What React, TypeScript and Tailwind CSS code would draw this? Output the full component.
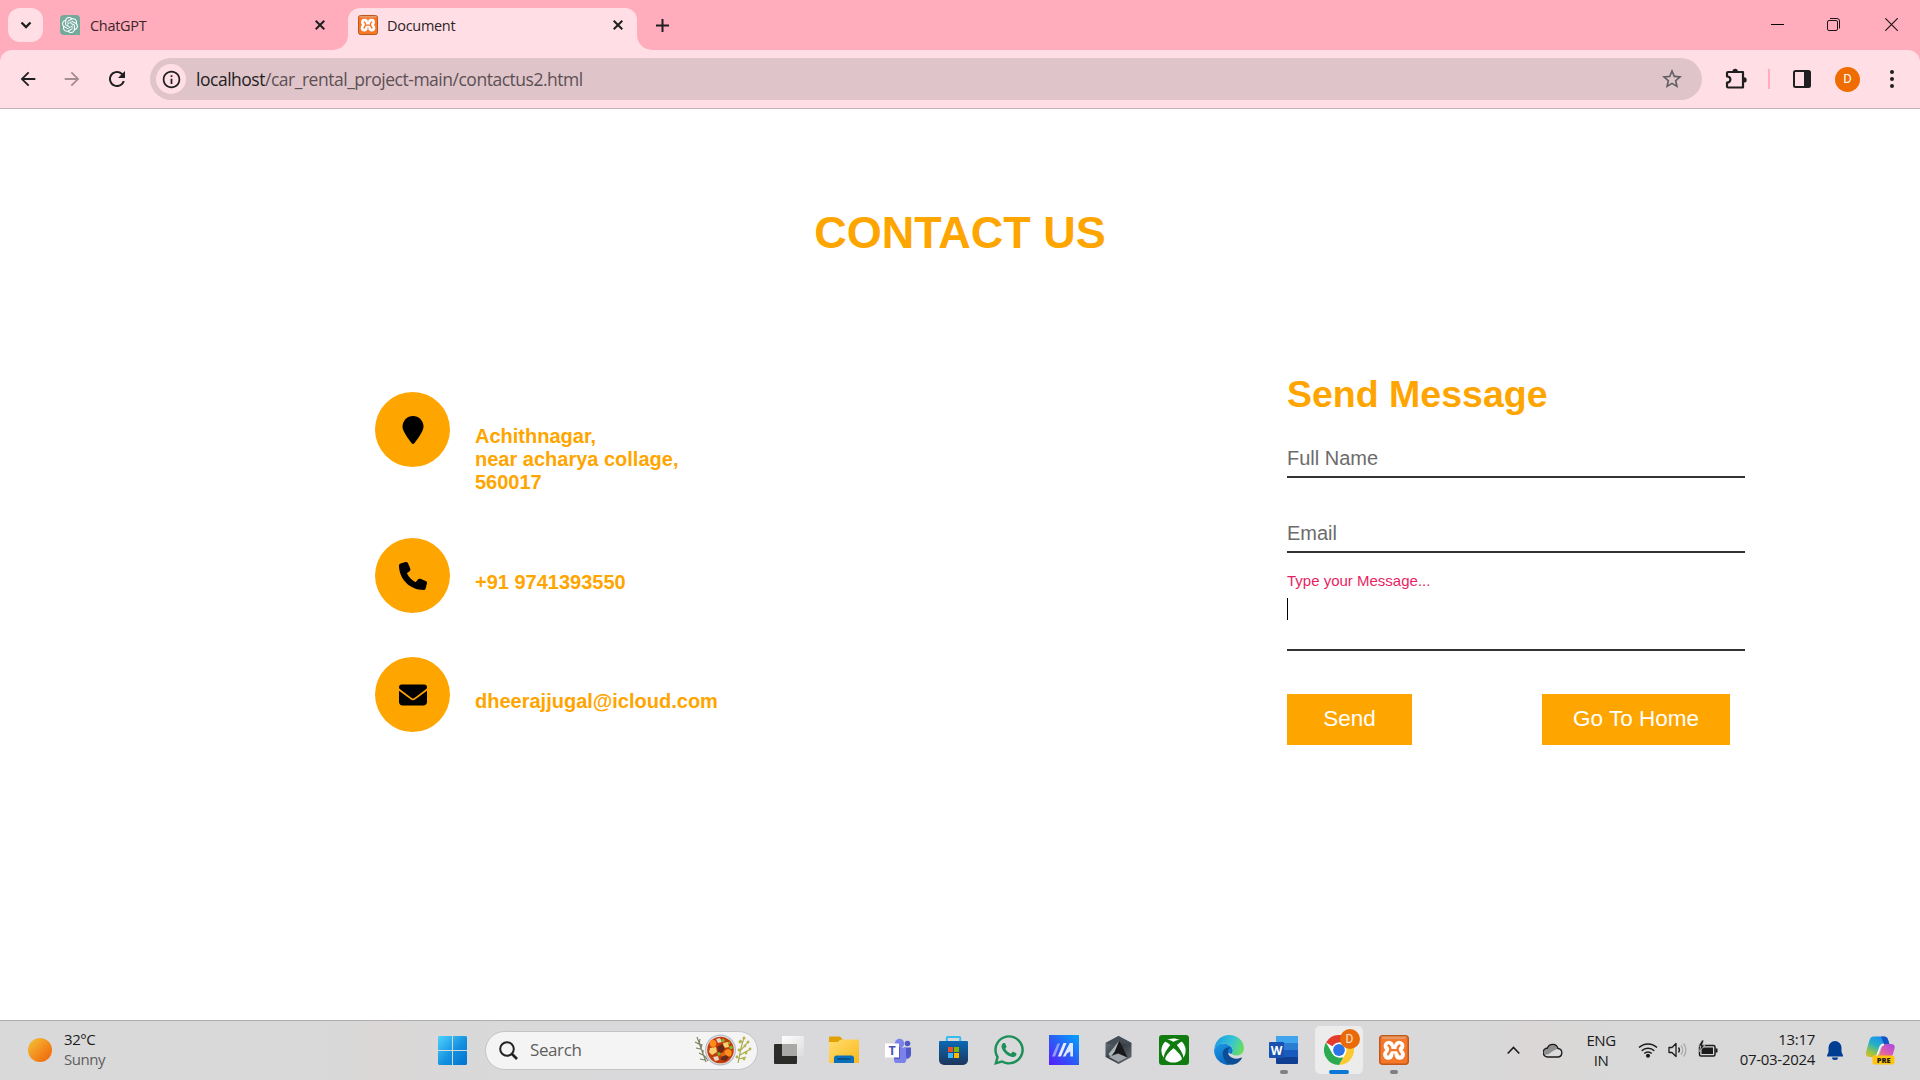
import React from "react";
import { FaEnvelope, FaLocationPin, FaPhone, FaWhatsapp, FaXbox } from "react-icons/fa6";
import { MdArrowBack, MdArrowForward, MdInfoOutline, MdRefresh, MdStarBorder } from "react-icons/md";
import { SiOpenai } from "react-icons/si";

const CloseIcon = ({ size = 10, stroke = 2 }: { size?: number; stroke?: number }) => (
  <svg width={size} height={size} viewBox="0 0 10 10" stroke="#1f1f22" strokeWidth={stroke} fill="none">
    <path d="M.7.7l8.6 8.6M9.3.7L.7 9.3" />
  </svg>
);

const Xampp = ({ size }: { size: number }) => (
  <svg width={size} height={size} viewBox="0 0 30 30">
    <rect x=".75" y=".75" width="28.5" height="28.5" rx="3" fill="#f4772a" stroke="#c2571a" strokeWidth="1.5" />
    <path d="M2 1.5h26l-2 2.5H4z" fill="#e39a68" />
    <g fill="#fff">
      <circle cx="9.800" cy="11" r="5.200" />
      <circle cx="20.200" cy="11" r="5.200" />
      <circle cx="9.300" cy="19.500" r="5.200" />
      <circle cx="20.700" cy="19.500" r="5.200" />
      <path d="M7 11h16v7.500H7z" />
    </g>
    <path
      d="M9.500 10.500c2 1.500 2.200 3 1.800 4.700-.2 1.500-1.600 2.600-2.200 4.300M20.500 10.500c-2 1.500-2.200 3-1.800 4.700.2 1.500 1.600 2.600 2.200 4.300M11 15.200h8"
      fill="none" stroke="#f4772a" strokeWidth="2.200" strokeLinecap="round"
    />
  </svg>
);

function TitleBar() {
  return (
    <div className="flex h-[50px] items-start bg-[#ffadbc]">
      <div className="mt-2 ml-2 flex h-[34px] w-[35px] items-center justify-center rounded-xl bg-[#ffdfe5]">
        <svg width="12" height="8" viewBox="0 0 12 8" fill="none" stroke="#1f1f22" strokeWidth="2.300">
          <path d="M1.500 1.500L6 6l4.500-4.500" />
        </svg>
      </div>
      <div className="ml-[17px] flex h-[50px] w-[288px] items-center">
        <span className="flex size-5 items-center justify-center rounded-[4px] rounded-br-none bg-[#74aa9c]">
          <SiOpenai size={16} color="#fff" />
        </span>
        <span className="mt-px ml-[10px] w-[225px] text-[14.500px] leading-5 tracking-[-0.3px] text-[#3a2529]">ChatGPT</span>
        <CloseIcon />
      </div>
      <div className="relative mt-[8px] flex h-[42px] w-[289px] items-center rounded-t-xl bg-[#ffdfe5] pl-[10px]">
        <svg className="absolute bottom-0 -left-[15px]" width="15" height="15" viewBox="0 0 15 15"><path d="M15 0v15H0A15 15 0 0 0 15 0" fill="#ffdfe5" /></svg>
        <svg className="absolute -right-[15px] bottom-0" width="15" height="15" viewBox="0 0 15 15"><path d="M0 0v15h15A15 15 0 0 1 0 0" fill="#ffdfe5" /></svg>
        <div className="flex w-full items-center pb-[8px]">
          <Xampp size={20} />
          <span className="mt-px ml-[9px] w-[226px] text-[14.500px] leading-5 tracking-[-0.3px] text-[#2c2426]">Document</span>
          <CloseIcon />
        </div>
      </div>
      <svg className="mt-[19px] ml-[19px]" width="13" height="13" viewBox="0 0 13 13" stroke="#1f1f22" strokeWidth="2"><path d="M6.500 0v13M0 6.500h13" /></svg>
      <div className="mt-[18px] mr-[22px] ml-auto flex gap-[43px]">
        <svg width="13" height="13" viewBox="0 0 13 13" stroke="#000"><path d="M0 6.500h13" /></svg>
        <svg width="13" height="13" viewBox="0 0 13 13" fill="none" stroke="#1f1518">
          <rect x=".5" y="2.500" width="10" height="10" rx="1.500" />
          <path d="M3 .5h7a2.500 2.500 0 0 1 2.500 2.500v7.500" />
        </svg>
        <svg className="ml-[2px]" width="13" height="13" viewBox="0 0 13 13" stroke="#1f1518" strokeWidth="1.200"><path d="M.3.300l12.400 12.400M12.700.3L.3 12.700" /></svg>
      </div>
    </div>
  );
}

function Toolbar() {
  return (
    <div className="h-[59px] border-b border-[#c9b0b5] bg-[#ffadbc]">
      <div className="flex h-[58px] items-center rounded-t-[12px] bg-[#ffdfe5] text-[#1f1f22]">
        <MdArrowBack className="ml-[17px]" size={22} />
        <MdArrowForward className="ml-[22px] text-[#a48e93]" size={22} />
        <MdRefresh className="ml-[22px]" size={24} />
        <div className="ml-[21px] flex h-[42px] w-[1552px] items-center rounded-full bg-[#dfc4c9] pl-[6px]">
          <span className="flex size-[30px] items-center justify-center rounded-full bg-[#ffdfe5]">
            <MdInfoOutline size={21} />
          </span>
          <span className="mt-px ml-[10px] text-[17.500px] tracking-[-0.48px] text-[#5c5054]">
            <span className="text-[#1f1f22]">localhost</span>/car_rental_project-main/contactus2.html
          </span>
          <MdStarBorder className="mr-[18px] ml-auto text-[#5f5f62]" size={24} />
        </div>
        <svg className="ml-[23px]" width="23" height="22" viewBox="0 0 23 22">
          <path
            d="M3 4h15v15.500H3c-.8 0-1-.4-1-1v-3.800c4.500 0 4.500-6.200 0-6.200V5c0-.7.300-1 1-1z"
            fill="none" stroke="#1f1f22" strokeWidth="2.200" strokeLinejoin="round"
          />
          <path d="M7.500 3.500a2.700 2.700 0 0 1 5.400 0zM19 9.200a2.700 2.700 0 0 1 0 5.400z" fill="#1f1f22" />
        </svg>
        <span className="ml-[20px] h-5 w-[2px] bg-[#ffadbc]" />
        <svg className="ml-[23px]" width="18" height="18" viewBox="0 0 18 18">
          <rect x="1" y="1" width="16" height="16" rx="1.500" fill="none" stroke="#1f1f22" strokeWidth="2" />
          <path d="M11 1h6v16h-6z" fill="#1f1f22" />
        </svg>
        <span className="ml-[24px] flex size-[25px] items-center justify-center rounded-full bg-[#ef6c00] font-['Roboto'] text-[13px] text-white">D</span>
        <span className="ml-[30px] flex flex-col gap-[3px]">
          <i className="size-1 rounded-full bg-[#1f1f22]" />
          <i className="size-1 rounded-full bg-[#1f1f22]" />
          <i className="size-1 rounded-full bg-[#1f1f22]" />
        </span>
      </div>
    </div>
  );
}

const ContactRow = ({ icon, children }: { icon: React.ReactNode; children: React.ReactNode }) => (
  <div className="flex h-[75px] items-start">
    <span className="flex size-[75px] items-center justify-center rounded-full bg-[#ffa500] text-black">{icon}</span>
    <p className="mt-[33px] ml-[25px] text-[20px] leading-[23px] font-bold text-[#ffa500]">{children}</p>
  </div>
);

function ContactPage() {
  return (
    <main className="h-[911px] bg-white font-['Liberation_Sans',Arial,sans-serif]">
      <h1 className="pt-[98px] text-center text-[45px] leading-[52px] font-bold text-[#ffa500]">CONTACT US</h1>
      <div className="flex">
        <section className="mt-[133px] ml-[375px] flex w-[912px] flex-col">
          <ContactRow icon={<FaLocationPin size={28} />}>
            Achithnagar,<br />near acharya collage,<br />560017
          </ContactRow>
          <div className="mt-[71px]"><ContactRow icon={<FaPhone size={28} />}>+91 9741393550</ContactRow></div>
          <div className="mt-[44px]"><ContactRow icon={<FaEnvelope size={28} />}>dheerajjugal@icloud.com</ContactRow></div>
        </section>
        <form className="w-[458px] pt-[114px]">
          <h2 className="text-[37.500px] leading-[43px] font-bold text-[#ffa500]">Send Message</h2>
          <div className="mt-[31px] h-[31px] border-b-2 border-[#333] text-[20px] leading-[23px] text-[#6c6c6c]">Full Name</div>
          <div className="mt-[44px] h-[31px] border-b-2 border-[#333] text-[20px] leading-[23px] text-[#6c6c6c]">Email</div>
          <div className="mt-[19px] h-[79px] border-b-2 border-[#333]">
            <div className="h-[17px] text-[15px] leading-[17px] text-[#e91e63]">Type your Message...</div>
            <div className="mt-[9px] h-[22px] w-px bg-black" />
          </div>
          <div className="mt-[43px] flex text-[22.500px] text-white">
            <button type="button" className="h-[51px] w-[125px] bg-[#ffa500] pb-[2px]">Send</button>
            <button type="button" className="ml-[130px] h-[51px] w-[188px] bg-[#ffa500] pb-[2px]">Go To Home</button>
          </div>
        </form>
      </div>
    </main>
  );
}

const WindowsLogo = () => (
  <svg width="29" height="29" viewBox="0 0 29 29">
    <defs><linearGradient id="win" x1="0" y1="0" x2="1" y2="1"><stop stopColor="#4fd2ff" /><stop offset=".55" stopColor="#1390df" /><stop offset="1" stopColor="#0072d0" /></linearGradient></defs>
    <path d="M1 0h13v14H0V1zM15 0h13l1 1v13H15zM0 15h14v14H1l-1-1zM15 15h14v13l-1 1H15z" fill="url(#win)" />
  </svg>
);

const StewArt = () => (
  <svg width="58" height="32" viewBox="0 0 58 32">
    <g stroke="#7d8763" strokeWidth="1.200" fill="none">
      <path d="M3 3l9 25M1 8l4 2 1-5M2 14l5 1 1-5M5 19l4 2 0-5M6 25l5 1-1-5M14 27l-3-5M8 12l-3-3" />
    </g>
    <g stroke="#a3a544" strokeWidth="1.100" fill="none"><path d="M44 29c2-10 3-17 6-25M47 16l7-8M46 21l9-5M45 25l7-2M49 9l-3-3" /></g>
    <g fill="#b5b548">
      <circle cx="50" cy="4" r="1.500" /><circle cx="54" cy="8" r="1.500" /><circle cx="46" cy="8" r="1.400" /><circle cx="51" cy="12" r="1.400" />
      <circle cx="56" cy="15" r="1.400" /><circle cx="45" cy="16" r="1.400" /><circle cx="52" cy="19" r="1.400" /><circle cx="43" cy="23" r="1.400" /><circle cx="50" cy="25" r="1.400" />
    </g>
    <circle cx="26.500" cy="16" r="15.500" fill="#b9bcc4" /><circle cx="26.500" cy="16" r="14.300" fill="#e6e6ea" />
    <circle cx="26.500" cy="16" r="13.300" fill="#c43c0a" />
    <circle cx="19" cy="9.500" r="3.400" fill="#ff8a1c" /><circle cx="34" cy="19" r="3.700" fill="#ff9020" /><circle cx="29" cy="20.500" r="2.500" fill="#e86312" />
    <path d="M16 14l6-1 1 5-5 3-3-3zM29 9l5-1 1 5-5 1z" fill="#f7cf72" />
    <path d="M23 13l5-3 3 4-3 5-4-1zM27 23l5-2 3 2-3 4-5-1z" fill="#6b2a18" />
    <path d="M22 5l4-1 2 4-4 1zM19 23l5-1 1 4-4 1z" fill="#e9d3c2" />
    <g fill="#79b829"><circle cx="29" cy="6.500" r="1.700" /><circle cx="37" cy="13.500" r="1.800" /><circle cx="25" cy="20" r="1.700" /><circle cx="35" cy="9" r="1.200" /></g>
  </svg>
);

const TaskView = () => (
  <svg width="30" height="30" viewBox="0 0 30 30">
    <defs><linearGradient id="tv" x1="0" y1="0" x2="1" y2="1"><stop stopColor="#fff" stopOpacity=".98" /><stop offset="1" stopColor="#ddd" stopOpacity=".9" /></linearGradient></defs>
    <rect x="0" y="9" width="23" height="20" rx="1" fill="#2b2b29" />
    <rect x="8" y="1" width="22" height="20" rx="1" fill="url(#tv)" />
    <path d="M8 9h15v12H8z" fill="#a8a8a6" />
  </svg>
);

const Folder = () => (
  <svg width="30" height="28" viewBox="0 0 30 28">
    <defs><linearGradient id="fo" x1="0" y1="0" x2="1" y2="1"><stop stopColor="#ffdc6e" /><stop offset="1" stopColor="#fcb91c" /></linearGradient></defs>
    <path d="M0 1.500Q0 .5 1 .5h9q1 0 2 1l2 2.500h-3L9 6H0z" fill="#e2a100" />
    <path d="M0 6h9l3-2.500h17q1 0 1 1V26q0 1-1 1H1q-1 0-1-1z" fill="url(#fo)" />
    <path d="M5 27v-5q0-2.500 2.500-2.500h15q2.500 0 2.500 2.500v5z" fill="#0a70b9" />
    <path d="M8.500 23h13" stroke="#044780" strokeWidth="1.400" />
  </svg>
);

const Teams = () => (
  <svg width="27" height="25" viewBox="0 0 27 25">
    <circle cx="14.500" cy="5.500" r="4.700" fill="#7b83eb" /><circle cx="22.500" cy="5.500" r="2.800" fill="#5059c9" />
    <path d="M19 9.500h7V17a4.500 4.500 0 0 1-7 3z" fill="#5059c9" />
    <path d="M9 9.500h12V18a6 6 0 0 1-12 5z" fill="#7b83eb" />
    <path d="M9 9h6v12H9z" fill="#535bbd" />
    <rect x="0" y="5.500" width="14" height="14" fill="#fff" />
    <text x="7" y="17" textAnchor="middle" fontFamily="Open Sans" fontWeight="700" fontSize="12.500" fill="#4b53bc">T</text>
  </svg>
);

const Store = () => (
  <svg width="29" height="29" viewBox="0 0 29 29">
    <defs><linearGradient id="st" x1="0" y1="0" x2="0" y2="1"><stop stopColor="#0a69b4" /><stop offset="1" stopColor="#1d355c" /></linearGradient></defs>
    <path d="M7.800 6V1.700q0-.7.7-.7h12q.7 0 .7.700V6" fill="none" stroke="#35bdf2" strokeWidth="2" />
    <path d="M1 5h27q1 0 1 1v18a5 5 0 0 1-5 5H5a5 5 0 0 1-5-5V6q0-1 1-1z" fill="url(#st)" />
    <path d="M9 11h5v5H9z" fill="#f25022" /><path d="M15 11h5v5h-5z" fill="#7fba00" /><path d="M9 17h5v5H9z" fill="#39b8f5" /><path d="M15 17h5v5h-5z" fill="#ffb900" />
  </svg>
);

const MyAsus = () => (
  <svg width="30" height="30" viewBox="0 0 30 30">
    <defs><linearGradient id="ma" x1="0" y1="1" x2="1" y2="0"><stop stopColor="#5b1bff" /><stop offset=".5" stopColor="#2a5df5" /><stop offset="1" stopColor="#00a6ff" /></linearGradient></defs>
    <path d="M0 0h30v30H0z" fill="url(#ma)" />
    <path d="M8.500 8.500h2.500L6 21.500H3z" fill="#cfd6ff" opacity=".6" />
    <path d="M14.500 8h3L12 21.500H8.800z" fill="#e9edff" />
    <path d="M20.800 8H24v13.500h-2.700v-5L18 18.500l-1.500 3h-2.700z" fill="#dfe8ff" />
  </svg>
);

const Armoury = () => (
  <svg width="28" height="30" viewBox="0 0 28 30">
    <defs><linearGradient id="ar" x1="0" y1="0" x2="1" y2="1"><stop stopColor="#74808a" /><stop offset=".5" stopColor="#353c43" /><stop offset="1" stopColor="#6c7378" /></linearGradient></defs>
    <path d="M13.500 1L26.500 8v14l-13 7-13-7V8z" fill="url(#ar)" />
    <path d="M13.500 1L26.500 8 19 9l-5.500-3L8 10 .5 8z" fill="#454e56" />
    <path d="M14.500 6l8 16.500-9-4-8 2z" fill="#17191c" />
    <path d="M14 6L3.500 19l2 3 4-5z" fill="#aeb5ba" />
    <path d="M4 22l9-3.500 9 4-8.500 4.500z" fill="#9fa5a9" />
  </svg>
);

const Edge = () => (
  <svg width="30" height="30" viewBox="0 0 30 30">
    <defs>
      <linearGradient id="e1" x1="0" y1=".3" x2="1" y2=".6"><stop stopColor="#1b9de2" /><stop offset=".55" stopColor="#35c4d6" /><stop offset="1" stopColor="#6be05a" /></linearGradient>
      <linearGradient id="e2" x1="0" y1="0" x2=".6" y2="1"><stop stopColor="#1c9ee6" /><stop offset="1" stopColor="#0a63c0" /></linearGradient>
    </defs>
    <path d="M0 15C2 9 6 8 10.500 8.500c5 .5 8.500 4 8.500 7.500 0 1.800-1.500 2 -1.500 3C10 16 10 21 11 24c1 3 3.500 5.200 6 5.800C8 31 0 24 0 15z" fill="url(#e2)" />
    <path d="M.3 13.500C1.500 5 8 0 15 0c8.500 0 15 6 15 13 0 5-3.500 7.500-7.500 7.500-3.500 0-5-1.300-4.500-2.500 2-3.500 0-8.500-6.500-9.300C6.500 8 2.500 10 .3 13.500z" fill="url(#e1)" />
    <path d="M16.500 12.500C11 11.500 8 16 9 20.500c1 5 4.500 9.500 9 9.300 4.500-.4 8-3 9.700-6.300.4-.8-.2-1.100-.9-.8C20 26 13 21 14 16c.3-1.700 1.300-2.700 2.500-3.500z" fill="#0c4d94" />
  </svg>
);

const Word = () => (
  <svg width="29" height="28" viewBox="0 0 29 28">
    <rect x="7" y="0" width="22" height="28" rx="1" fill="#103f91" />
    <path d="M7 1q0-1 1-1h20q1 0 1 1v6H7z" fill="#41a5ee" /><path d="M7 7h22v7H7z" fill="#2b7cd3" /><path d="M7 14h22v7H7z" fill="#185abd" />
    <rect x="0" y="6" width="15" height="16" rx="1" fill="#1a51ae" />
    <text x="7.500" y="18.500" textAnchor="middle" fontFamily="Open Sans" fontWeight="700" fontSize="12" fill="#fff">W</text>
  </svg>
);

const Chrome = () => (
  <svg width="30" height="30" viewBox="0 0 30 30">
    <circle cx="15" cy="15" r="15" fill="#fff" />
    <path d="M15 15L2 7.500A15 15 0 0 1 28 7.500H15z" fill="#e33b2e" />
    <path d="M15 7.500h13A15 15 0 0 1 15 30l6.500-11.200z" fill="#fcc934" />
    <path d="M2 7.500l6.500 11.300L15 22.500h4.300L15 30A15 15 0 0 1 2 7.500z" fill="#2da94f" />
    <circle cx="15" cy="15" r="7.500" fill="#fff" /><circle cx="15" cy="15" r="5.900" fill="#2b74e8" />
  </svg>
);

const Slot = ({ children, mark }: { children: React.ReactNode; mark?: string }) => (
  <div className="relative flex h-full w-[55px] items-center justify-center">
    {children}
    {mark && <span className={"absolute bottom-[5px] h-1 rounded-full " + mark} />}
  </div>
);

function Taskbar() {
  return (
    <footer className="flex h-[60px] items-center border-t border-[#aeaeb0] bg-[linear-gradient(90deg,#d9d9d9_0%,#d9d9d9_17%,#dad7d6_20%,#d9d9da_26%,#d9d9dc_50%,#d9d9da_77%,#dad7d6_80%,#d9d9d9_84%)] pb-px text-[15px]">
      <span className="ml-7 size-6 rounded-full bg-[linear-gradient(135deg,#f0bd35_10%,#f3901f_50%,#f06a0c_90%)]" />
      <div className="-mt-[3px] ml-[12px] w-[374px] leading-5 tracking-[-0.45px]">
        <div className="text-[#1b1b1b]">32°C</div>
        <div className="text-[#5d5d5d]">Sunny</div>
      </div>
      <WindowsLogo />
      <div className="ml-[18px] flex h-[39px] w-[273px] items-center rounded-full border border-[#c4c4c6] bg-[#f4f4f4]">
        <svg className="ml-[13px]" width="19" height="19" viewBox="0 0 19 19" fill="none" stroke="#222" strokeWidth="2"><circle cx="8" cy="8" r="6.800" /><path d="M13 13l5 5" strokeWidth="2.600" /></svg>
        <span className="ml-[12px] text-[17px] tracking-[-0.4px] text-[#5f5f5f]">Search</span>
        <span className="mr-[5px] ml-auto"><StewArt /></span>
      </div>
      <div className="ml-[3px] flex h-full">
        <Slot><TaskView /></Slot>
        <Slot><Folder /></Slot>
        <Slot><Teams /></Slot>
        <Slot><Store /></Slot>
        <Slot><FaWhatsapp size={34} color="#1d8f58" /></Slot>
        <Slot><MyAsus /></Slot>
        <Slot><Armoury /></Slot>
        <Slot><span className="flex size-[30px] items-center justify-center rounded-[3px] bg-[#107c10]"><FaXbox size={25} color="#fff" /></span></Slot>
        <Slot><Edge /></Slot>
        <Slot mark="w-2 bg-[#808082]"><Word /></Slot>
        <Slot mark="w-5 bg-[#0a78d4]">
          <span className="flex size-12 items-center justify-center rounded-[5px] bg-[#ececed]"><Chrome /></span>
          <span className="absolute top-[8px] right-[6.500px] flex size-5 items-center justify-center rounded-full bg-[#e96a0a] font-['Roboto'] text-[12px] text-[#ffe0c8]">D</span>
        </Slot>
        <Slot mark="w-2 bg-[#808082]"><Xampp size={30} /></Slot>
      </div>
      <div className="ml-auto flex h-full items-center text-[#1b1b1b]">
        <svg width="13" height="9" viewBox="0 0 13 9" fill="none" stroke="#1b1b1b" strokeWidth="1.600"><path d="M.7 7.500L6.500 1.500l5.800 6" /></svg>
        <svg className="ml-[23px]" width="20" height="15" viewBox="0 0 20 15">
          <path d="M4.500 5A5.500 5.500 0 0 1 15 5.500a4.300 4.300 0 0 1 .3 8.500H4.700a4.500 4.500 0 0 1-.2-9z" fill="#dcdcdc" />
          <path d="M1 12a4.500 4.500 0 0 1 3.500-7A5.500 5.500 0 0 1 15 5.500L17 6C10 5 8 12 1 12z" fill="#8f8f8f" />
          <path d="M4.500 5A5.500 5.500 0 0 1 15 5.500a4.300 4.300 0 0 1 .3 8.500H4.700a4.500 4.500 0 0 1-.2-9z" fill="none" stroke="#1b1b1b" strokeWidth="1.300" />
        </svg>
        <div className="-mt-px ml-[20px] w-[36px] text-center leading-5 tracking-[-0.45px]"><div>ENG</div><div>IN</div></div>
        <svg className="ml-[19px]" width="20" height="16" viewBox="0 0 20 16" fill="none" stroke="#1b1b1b" strokeWidth="1.500">
          <path d="M1 5.500a13 13 0 0 1 18 0M3.700 8.800a9 9 0 0 1 12.600 0M6.300 11.500a5.300 5.300 0 0 1 7.400 0" /><circle cx="10" cy="13.800" r="1.300" fill="#1b1b1b" />
        </svg>
        <svg className="ml-[10px]" width="20" height="16" viewBox="0 0 20 16" fill="none" stroke="#1b1b1b" strokeWidth="1.300">
          <path d="M1 5.500h3L8 1.500v13l-4-4H1z" strokeLinejoin="round" /><path d="M10.500 5.500a4 4 0 0 1 0 5" /><path d="M13 3.500a7 7 0 0 1 0 9M15.500 1.500a10 10 0 0 1 0 13" stroke="#aaa" />
        </svg>
        <svg className="-mt-[2px] ml-[10px]" width="20" height="18" viewBox="0 0 20 18">
          <rect x="1.500" y="5.500" width="15.500" height="10.500" rx="1.500" fill="none" stroke="#1b1b1b" strokeWidth="1.500" /><rect x="3.500" y="7.500" width="11.500" height="6.500" fill="#1b1b1b" /><path d="M17.500 8.500h2v4h-2z" fill="#1b1b1b" />
          <path d="M4 0L.3 6h2.500L1.500 11.500 7 5H4.500L6 0z" fill="#1b1b1b" stroke="#d9d9d9" strokeWidth=".7" />
        </svg>
        <div className="-mt-[3px] w-[97px] text-right leading-5 tracking-[-0.3px]"><div>13:17</div><div>07-03-2024</div></div>
        <svg className="ml-[12px]" width="16" height="19" viewBox="0 0 16 19"><path d="M8 0a6.500 6.500 0 0 1 6.500 6.500V11l1.500 3.500v1H0v-1L1.500 11V6.500A6.500 6.500 0 0 1 8 0zM5 16.500h6a3 2.500 0 0 1-6 0z" fill="#003e92" /></svg>
        <svg className="mr-[25px] ml-[23px]" width="29" height="29" viewBox="0 0 29 29">
          <defs>
            <linearGradient id="c1" x1=".6" y1="0" x2="0" y2="1"><stop stopColor="#1a8ff0" /><stop offset=".4" stopColor="#27b1c6" /><stop offset=".75" stopColor="#9dc53f" /><stop offset="1" stopColor="#f0b62c" /></linearGradient>
            <linearGradient id="c2" x1="1" y1="0" x2="0" y2="1"><stop stopColor="#a54be0" /><stop offset=".5" stopColor="#d959b8" /><stop offset="1" stopColor="#f58a55" /></linearGradient>
          </defs>
          <path d="M7.500.5H18q3 0 4 3l1.500 5H19q-3 0-4 3l-2 6q-1 3.500-4 3.500H4q-5 0-4-5L3.500 4q1-3.500 4-3.500z" fill="url(#c1)" />
          <path d="M15 .5h3q3 0 4 3l1.500 5H18q-2-5-3-8z" fill="#1554c4" />
          <path d="M20 8h5q4.500 0 3.500 4.500L27 18q-1 3-4 3H10q2.500-.5 3.300-3l2.500-7q1-3 4.200-3z" fill="url(#c2)" />
          <path d="M18 8.500q-3 0-4 3l-2.500 7q-.8 2-3 2.500" fill="none" stroke="#f4f2ec" strokeWidth="1.800" />
          <rect x="6.500" y="19.500" width="22" height="9" rx="2" fill="#ffc40d" />
          <text x="17.700" y="26.800" textAnchor="middle" fontFamily="Open Sans" fontWeight="800" fontSize="7.500" fill="#1b1b1b">PRE</text>
        </svg>
      </div>
    </footer>
  );
}

export default function App() {
  return (
    <div className="flex h-[1080px] w-[1920px] flex-col overflow-hidden bg-white font-['Open_Sans','Noto_Sans',sans-serif]">
      <TitleBar />
      <Toolbar />
      <ContactPage />
      <Taskbar />
    </div>
  );
}
